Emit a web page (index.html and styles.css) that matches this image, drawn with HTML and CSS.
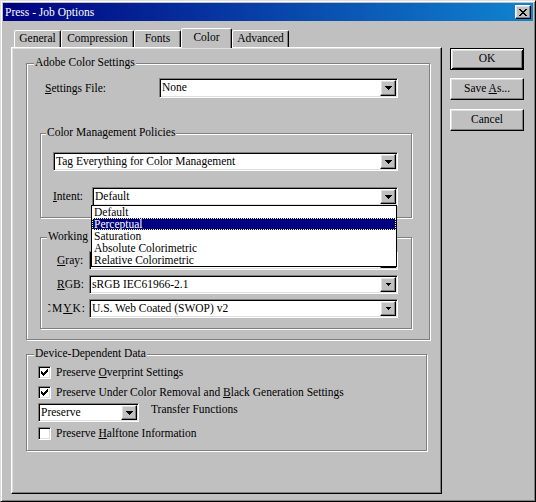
FILE: index.html
```html
<!DOCTYPE html>
<html>
<head>
<meta charset="utf-8">
<link rel="stylesheet" href="styles.css">
</head>
<body>
<div class="window">
  <div class="titlebar">
    <span class="title">Press - Job Options</span>
    <div class="close"><svg width="8" height="7" viewBox="0 0 8 7"><path d="M0 0h2v1h-2zM6 0h2v1h-2zM1 1h2v1h-2zM5 1h2v1h-2zM2 2h4v1h-4zM3 3h2v1h-2zM2 4h4v1h-4zM1 5h2v1h-2zM5 5h2v1h-2zM0 6h2v1h-2zM6 6h2v1h-2z" fill="#000"/></svg></div>
  </div>
  <div class="main">
    <div class="left">
      <div class="tabs">
        <div class="tab t-general">General</div>
        <div class="tab t-comp">Compression</div>
        <div class="tab t-fonts">Fonts</div>
        <div class="tab sel t-color">Color</div>
        <div class="tab t-adv">Advanced</div>
      </div>
      <div class="panel">
        <div class="group g1">
          <div class="legend">Adobe Color Settings</div>
          <div class="row settings">
            <span class="lbl l-settings"><u>S</u>ettings File:</span>
            <div class="combo c-settings"><span class="val">None</span><span class="arrow"><svg width="7" height="4" viewBox="0 0 7 4"><path d="M0 0H7V1H6V2H5V3H4V4H3V3H2V2H1V1H0Z"/></svg></span></div>
          </div>
          <div class="group g2">
            <div class="legend">Color Management Policies</div>
            <div class="combo c-tag"><span class="val">Tag Everything for Color Management</span><span class="arrow"><svg width="7" height="4" viewBox="0 0 7 4"><path d="M0 0H7V1H6V2H5V3H4V4H3V3H2V2H1V1H0Z"/></svg></span></div>
            <div class="row intent">
              <span class="lbl l-intent"><u>I</u>ntent:</span>
              <div class="combo c-intent"><span class="val">Default</span><span class="arrow"><svg width="7" height="4" viewBox="0 0 7 4"><path d="M0 0H7V1H6V2H5V3H4V4H3V3H2V2H1V1H0Z"/></svg></span>
                <div class="droplist">
                  <div class="item">Default</div>
                  <div class="item hi">Perceptual</div>
                  <div class="item">Saturation</div>
                  <div class="item">Absolute Colorimetric</div>
                  <div class="item">Relative Colorimetric</div>
                </div>
              </div>
            </div>
          </div>
          <div class="group g3">
            <div class="legend">Working</div>
            <div class="row ws r-gray">
              <span class="lbl l-ws"><u>G</u>ray:</span>
              <div class="combo c-ws"><span class="val"></span><span class="arrow"><svg width="5" height="3" viewBox="0 0 5 3"><path d="M0 0H5V1H4V2H3V3H2V2H1V1H0Z"/></svg></span></div>
            </div>
            <div class="row ws r-rgb">
              <span class="lbl l-ws"><u>R</u>GB:</span>
              <div class="combo c-ws"><span class="val">sRGB IEC61966-2.1</span><span class="arrow"><svg width="5" height="3" viewBox="0 0 5 3"><path d="M0 0H5V1H4V2H3V3H2V2H1V1H0Z"/></svg></span></div>
            </div>
            <div class="row ws r-cmyk">
              <span class="lbl l-cmyk"><span class="cmyk-text">CM<u>Y</u>K:</span></span>
              <div class="combo c-ws c-cmyk"><span class="val">U.S. Web Coated (SWOP) v2</span><span class="arrow"><svg width="5" height="3" viewBox="0 0 5 3"><path d="M0 0H5V1H4V2H3V3H2V2H1V1H0Z"/></svg></span></div>
            </div>
          </div>
        </div>
        <div class="group g4">
          <div class="legend">Device-Dependent Data</div>
          <div class="check-row cr1">
            <span class="cbox"><svg width="7" height="7" viewBox="0 0 7 7"><path d="M6 0H7V3H6V4H5V5H4V6H3V7H2V6H1V5H0V2H1V3H2V4H3V3H4V2H5V1H6Z"/></svg></span>
            <span class="ctext">Preserve <u>O</u>verprint Settings</span>
          </div>
          <div class="check-row cr2">
            <span class="cbox"><svg width="7" height="7" viewBox="0 0 7 7"><path d="M6 0H7V3H6V4H5V5H4V6H3V7H2V6H1V5H0V2H1V3H2V4H3V3H4V2H5V1H6Z"/></svg></span>
            <span class="ctext">Preserve Under Color Removal and <u>B</u>lack Generation Settings</span>
          </div>
          <div class="row transfer">
            <div class="combo c-preserve"><span class="val">Preserve</span><span class="arrow"><svg width="7" height="4" viewBox="0 0 7 4"><path d="M0 0H7V1H6V2H5V3H4V4H3V3H2V2H1V1H0Z"/></svg></span></div>
            <span class="tf">Transfer Functions</span>
          </div>
          <div class="check-row cr3">
            <span class="cbox"></span>
            <span class="ctext">Preserve <u>H</u>alftone Information</span>
          </div>
        </div>
      </div>
    </div>
    <div class="buttons">
      <div class="btn default">OK</div>
      <div class="btn b-save">Save <u>A</u>s...</div>
      <div class="btn b-cancel">Cancel</div>
    </div>
  </div>
</div>
</body>
</html>
```
FILE: styles.css
```css
* { box-sizing: border-box; }
html, body { margin: 0; padding: 0; }
body {
  background: #c0c0c0;
  font-family: "Liberation Serif", "Times New Roman", serif;
  font-size: 11.5px;
  color: #000;
}
u { text-decoration: underline; text-underline-offset: 1px; }

.window {
  width: 536px;
  height: 502px;
  background: #c0c0c0;
  border: 1px solid;
  border-color: #dfdfdf #000 #000 #dfdfdf;
  box-shadow: inset 1px 1px 0 #fff, inset -1px -1px 0 #808080;
  padding: 2px;
  overflow: hidden;
}

.titlebar {
  height: 18px;
  background: linear-gradient(to right, #000080, #1084d0);
  display: flex;
  align-items: center;
  justify-content: space-between;
  padding: 0 2px;
}
.title { color: #fff; font-size: 11.5px; line-height: 18px; white-space: nowrap; }

.close, .arrow, .btn {
  background: #c0c0c0;
  border: 1px solid;
  border-color: #fff #000 #000 #fff;
  box-shadow: inset -1px -1px 0 #808080, inset 1px 1px 0 #dfdfdf;
}
.close {
  width: 16px;
  height: 14px;
  display: flex;
  align-items: center;
  justify-content: center;
}

.main { display: flex; padding-left: 8px; }
.left { margin-top: 7px; width: 431px; flex: none; }

.tabs {
  display: flex;
  align-items: flex-end;
  height: 19px;
  margin-left: 3px;
}
.tab {
  height: 17px;
  border: 1px solid;
  border-bottom: none;
  border-color: #fff #000 transparent #fff;
  border-radius: 2px 2px 0 0;
  box-shadow: inset -1px 0 0 #808080;
  text-align: center;
  line-height: 15px;
  white-space: nowrap;
  background: #c0c0c0;
}
.tab.sel {
  height: 20px;
  margin-bottom: -1px;
  position: relative;
  z-index: 1;
  line-height: 16px;
}
.t-general { width: 47px; }
.t-comp { width: 73px; }
.t-fonts { width: 47px; }
.t-color { width: 51px; }
.t-adv { width: 57px; }

.panel {
  height: 447px;
  border: 1px solid;
  border-color: #fff #000 #000 #fff;
  box-shadow: inset -1px -1px 0 #808080, inset 1px 1px 0 #dfdfdf;
  padding: 15px 0 0 14px;
}

.group {
  border: 1px solid #808080;
  box-shadow: 1px 1px 0 #fff, inset 1px 1px 0 #fff;
}
.legend {
  width: fit-content;
  height: 13px;
  line-height: 13px;
  margin: -8px 0 0 7px;
  padding: 0 1px;
  background: #c0c0c0;
  white-space: nowrap;
}
.g1 { width: 404px; height: 277px; }
.g2 { width: 372px; height: 85px; margin: 35px 0 0 13px; }
.g2 .legend { margin-left: 5px; }
.g3 { width: 372px; height: 92px; margin: 19px 0 0 13px; }
.g3 .legend { margin-left: 6px; padding-right: 6px; }
.g4 { width: 401px; height: 97px; margin-top: 14px; }

.row { display: flex; align-items: center; }
.lbl { white-space: nowrap; line-height: 13px; }

.settings { margin: 9px 0 0 18px; }
.l-settings { width: 114px; }

.combo {
  display: flex;
  height: 19px;
  background: #fff;
  border: 1px solid;
  border-color: #808080 #fff #fff #808080;
  box-shadow: inset 1px 1px 0 #000, inset -1px -1px 0 #dfdfdf;
  padding: 1px;
}
.val {
  flex: 1;
  line-height: 15px;
  padding-left: 1px;
  white-space: nowrap;
  overflow: hidden;
}
.arrow {
  width: 16px;
  flex: none;
  display: flex;
  align-items: center;
  justify-content: center;
}
.arrow svg { fill: #000; }

.c-settings { width: 239px; height: 20px; }
.c-tag { width: 345px; margin: 13px 0 0 12px; }
.intent { margin: 16px 0 0 12px; }
.l-intent { width: 39px; }
.c-intent { width: 306px; position: relative; }

.droplist {
  position: absolute;
  left: -2px;
  top: 17px;
  width: 306px;
  height: 62px;
  background: #fff;
  border: 1px solid #000;
  z-index: 5;
}
.item {
  height: 12px;
  line-height: 12px;
  padding-left: 2px;
  white-space: nowrap;
}
.item.hi {
  background: #000080;
  color: #fff;
  outline: 1px dotted #ffff80;
  outline-offset: -1px;
}

.ws { margin-left: 16px; }
.r-gray { margin-top: 8px; }
.r-rgb, .r-cmyk { margin-top: 5px; }
.l-ws { width: 32px; }
.l-cmyk {
  width: 38px;
  margin-left: -9px;
  margin-right: 3px;
  display: flex;
  justify-content: flex-end;
  overflow: hidden;
}
.cmyk-text { flex: none; letter-spacing: 1px; }
.c-ws { width: 309px; }

.check-row {
  display: flex;
  align-items: center;
  height: 13px;
  margin-left: 11px;
}
.cr1 { margin-top: 6px; }
.cr2 { margin-top: 7px; }
.cr3 { margin-top: 5px; }
.cbox {
  width: 13px;
  height: 13px;
  flex: none;
  background: #fff;
  border: 1px solid;
  border-color: #808080 #fff #fff #808080;
  box-shadow: inset 1px 1px 0 #000, inset -1px -1px 0 #dfdfdf;
  display: flex;
  align-items: center;
  justify-content: center;
}
.cbox svg { fill: #000; }
.ctext { margin-left: 5px; line-height: 13px; white-space: nowrap; }

.transfer { margin: 4px 0 0 11px; align-items: flex-start; }
.c-preserve { width: 101px; }
.tf { margin-left: 12px; line-height: 13px; white-space: nowrap; }

.buttons {
  margin: 27px 0 0 8px;
  width: 74px;
  display: flex;
  flex-direction: column;
}
.btn {
  height: 22px;
  line-height: 19px;
  text-align: center;
  white-space: nowrap;
}
.btn.default {
  border-color: #000;
  box-shadow: inset 1px 1px 0 #fff, inset -1px -1px 0 #000, inset 2px 2px 0 #dfdfdf, inset -2px -2px 0 #808080;
}
.b-save { margin-top: 8px; }
.b-cancel { margin-top: 9px; }
```
